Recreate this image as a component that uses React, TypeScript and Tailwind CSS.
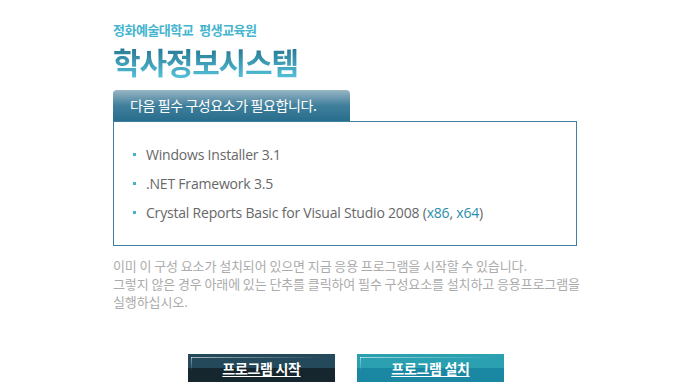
import React from "react";

const kr = { fontFamily: '"Noto Sans CJK KR", "Noto Sans", sans-serif' };
const latin = { fontFamily: '"Open Sans", "Noto Sans CJK KR", sans-serif' };

function Item({ children }: { children: React.ReactNode }) {
  return (
    <li className="flex items-center h-[29px]">
      <span className="w-[3px] h-[3px] bg-[#45b3cb] ml-[19px] mr-[10px]" />
      <span className="text-[14px] text-[#676767] tracking-[-0.2px]" style={latin}>
        {children}
      </span>
    </li>
  );
}

function Btn({ label, dark }: { label: string; dark?: boolean }) {
  return (
    <button
      className={
        "relative w-[147px] h-[28px] flex flex-col overflow-hidden " +
        (dark ? "bg-[#15262f]" : "bg-[#1b88a3]")
      }
      style={kr}
    >
      <span className={"block h-[14px] w-full " + (dark ? "bg-[#23495a]" : "bg-[#2aa0b1]")} />
      <span className="absolute left-[3px] top-[3px] right-[10px] h-px bg-gradient-to-r from-[#ffffff99] to-transparent" />
      <span className="absolute left-[3px] top-[3px] w-px h-[14px] bg-gradient-to-b from-[#ffffff80] to-transparent" />
      <span className="absolute inset-0 flex items-center justify-center text-white text-[14px] font-bold tracking-[-0.3px] underline underline-offset-2">
        {label}
      </span>
    </button>
  );
}

export default function App() {
  return (
    <div className="w-[690px] h-[390px] bg-white overflow-hidden" style={kr}>
      <div className="pl-[113px] pt-[22px] flex flex-col">
        <div className="text-[13px] font-bold text-[#45b5cf] tracking-[-0.5px] leading-[16px]">
          정화예술대학교<span className="inline-block w-[6px]" />평생교육원
        </div>
        <div className="mt-[6px] text-[30px] font-bold tracking-[-1.2px] leading-[34px] bg-gradient-to-b from-[#226f89] to-[#55c2da] bg-clip-text text-transparent w-fit">
          학사정보시스템
        </div>

        <div className="mt-[12px] w-[237px] h-[31px] rounded-t-[4px] bg-gradient-to-b from-[#97b6c4] via-[#3f7f9c] to-[#286d8c] flex items-center pl-[17px]">
          <span className="text-white text-[14px] tracking-[-0.4px]">다음 필수 구성요소가 필요합니다.</span>
        </div>
        <div className="w-[464px] h-[125px] border border-[#3f7f9f] pt-[18px]">
          <ul className="flex flex-col">
            <Item>Windows Installer 3.1</Item>
            <Item>.NET Framework 3.5</Item>
            <Item>
              Crystal Reports Basic for Visual Studio 2008 (<span className="text-[#2b8eab]">x86</span>,{" "}
              <span className="text-[#2b8eab]">x64</span>)
            </Item>
          </ul>
        </div>

        <p className="mt-[11px] text-[13px] leading-[18px] text-[#ababab] tracking-[-0.1px] whitespace-nowrap">
          이미 이 구성 요소가 설치되어 있으면 지금 응용 프로그램을 시작할 수 있습니다.
          <br />
          그렇지 않은 경우 아래에 있는 단추를 클릭하여 필수 구성요소를 설치하고 응용프로그램을
          <br />
          실행하십시오.
        </p>

        <div className="mt-[43px] ml-[75px] flex gap-[22px]">
          <Btn label="프로그램 시작" dark />
          <Btn label="프로그램 설치" />
        </div>
      </div>
    </div>
  );
}
